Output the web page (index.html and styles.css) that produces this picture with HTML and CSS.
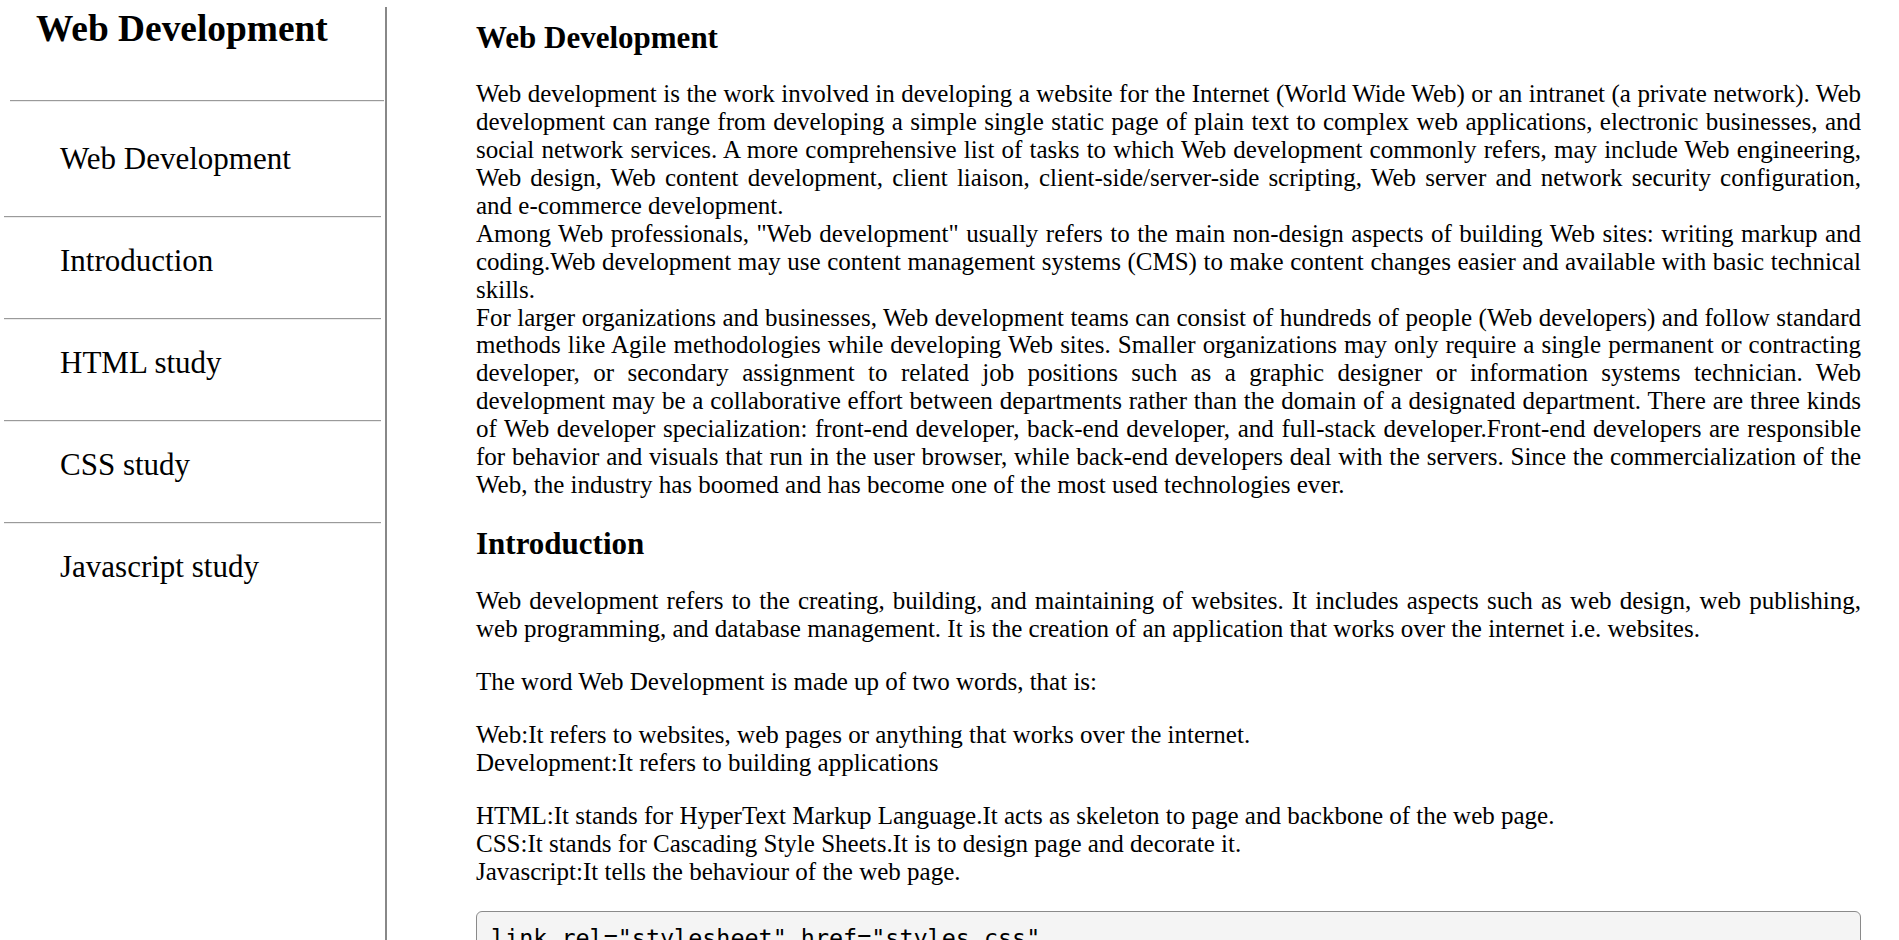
FILE: index.html
```html
<!DOCTYPE html>
<html lang="en">
<head>
<meta charset="utf-8">
<title>Web Development</title>
<link rel="stylesheet" href="styles.css">
</head>
<body>
<div class="page">
  <aside class="sidebar">
    <h2 class="sidebar-title">Web Development</h2>
    <hr class="sidebar-rule">
    <ul class="nav">
      <li class="nav-item">Web Development</li>
      <li class="nav-item">Introduction</li>
      <li class="nav-item">HTML study</li>
      <li class="nav-item">CSS study</li>
      <li class="nav-item nav-item-last">Javascript study</li>
    </ul>
  </aside>
  <main class="content">
    <section class="section">
      <h3 class="section-title">Web Development</h3>
      <p class="text">Web development is the work involved in developing a website for the Internet (World Wide Web) or an intranet (a private network). Web development can range from developing a simple single static page of plain text to complex web applications, electronic businesses, and social network services. A more comprehensive list of tasks to which Web development commonly refers, may include Web engineering, Web design, Web content development, client liaison, client-side/server-side scripting, Web server and network security configuration, and e-commerce development.<br>Among Web professionals, "Web development" usually refers to the main non-design aspects of building Web sites: writing markup and coding.Web development may use content management systems (CMS) to make content changes easier and available with basic technical skills.<br>For larger organizations and businesses, Web development teams can consist of hundreds of people (Web developers) and follow standard methods like Agile methodologies while developing Web sites. Smaller organizations may only require a single permanent or contracting developer, or secondary assignment to related job positions such as a graphic designer or information systems technician. Web development may be a collaborative effort between departments rather than the domain of a designated department. There are three kinds of Web developer specialization: front-end developer, back-end developer, and full-stack developer.Front-end developers are responsible for behavior and visuals that run in the user browser, while back-end developers deal with the servers. Since the commercialization of the Web, the industry has boomed and has become one of the most used technologies ever.</p>
    </section>
    <section class="section">
      <h3 class="section-title">Introduction</h3>
      <p class="text">Web development refers to the creating, building, and maintaining of websites. It includes aspects such as web design, web publishing, web programming, and database management. It is the creation of an application that works over the internet i.e. websites.</p>
      <p class="text">The word Web Development is made up of two words, that is:</p>
      <p class="text">Web:It refers to websites, web pages or anything that works over the internet.<br>Development:It refers to building applications</p>
      <p class="text">HTML:It stands for HyperText Markup Language.It acts as skeleton to page and backbone of the web page.<br>CSS:It stands for Cascading Style Sheets.It is to design page and decorate it.<br>Javascript:It tells the behaviour of the web page.</p>
      <pre class="code">link rel="stylesheet" href="styles.css"</pre>
    </section>
  </main>
</div>
</body>
</html>
```
FILE: styles.css
```css
html, body {
  margin: 0;
  padding: 0;
  background: #fff;
}

body {
  font-family: "Liberation Serif", "Times New Roman", serif;
  color: #000;
}

.page {
  display: flex;
  align-items: stretch;
  padding-top: 7px;
  min-height: 100vh;
  box-sizing: border-box;
}

.sidebar {
  width: 385px;
  flex: none;
  border-right: 2px solid #888;
}

.sidebar-title {
  margin: 0;
  padding-left: 36px;
  font-size: 37.4px;
  font-weight: bold;
  line-height: 43.7px;
}

.sidebar-rule {
  margin: 49px 1px 0 10px;
  height: 0;
  border: 0;
  border-top: 1px solid #9a9a9a;
  border-bottom: 1px solid #ececec;
}

.nav {
  list-style: none;
  margin: 0;
  padding: 13px 0 0;
}

.nav-item {
  margin: 0 4px;
  padding: 27px 0 40px 56px;
  font-size: 31px;
  line-height: 34px;
  border-bottom: 1px solid #9a9a9a;
  box-shadow: 0 1px 0 #ececec;
}

.nav-item-last {
  border-bottom: 0;
  box-shadow: none;
}

.content {
  flex: 1;
  min-width: 0;
  padding: 13px 38px 0 89px;
}

.section + .section {
  margin-top: 27px;
}

.section-title {
  margin: 0 0 24px;
  font-size: 31px;
  font-weight: bold;
  line-height: normal;
}

.section + .section .section-title {
  margin-bottom: 25px;
}

.text {
  margin: 0 0 25px;
  font-size: 25px;
  line-height: 27.94px;
  text-align: justify;
}

.section:first-child .text {
  margin-bottom: 0;
}

.code {
  margin: 25px 0 0;
  padding: 12px 14px;
  background: #f4f4f4;
  border: 1px solid #8a8a8a;
  border-radius: 6px;
  font-family: "DejaVu Sans Mono", "Liberation Mono", monospace;
  font-size: 23.4px;
  line-height: 1.25;
}
```
